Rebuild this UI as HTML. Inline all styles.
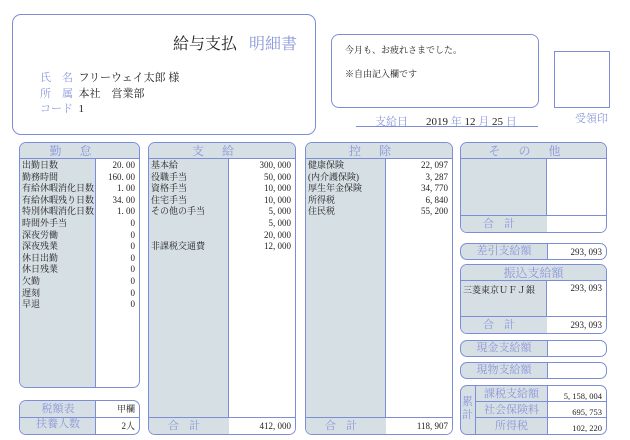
<!DOCTYPE html>
<html><head><meta charset="utf-8"><style>
*{margin:0;padding:0;box-sizing:border-box}
body{width:630px;height:440px;background:#fff;position:relative;overflow:hidden;font-family:"Liberation Serif","Noto Serif CJK SC",serif;color:#222}
.a{position:absolute}
.bx{position:absolute;border:1.5px solid #7e8ed6;border-radius:7px;overflow:hidden;background:#fff}
.hd{position:absolute;left:0;right:0;top:0;height:16px;background:#d6dfe4;border-bottom:1px solid #7e8ed6;color:#8a96da;font-size:12px;text-align:center;line-height:16px;letter-spacing:18px}
.lc{position:absolute;left:0;background:#d6dfe4;border-right:1px solid #7e8ed6}
.l{color:#8a96da}
.rows{position:absolute;font-size:9px;line-height:11.6px}
.num{text-align:right}
.tot{position:absolute;left:0;right:0;bottom:0;height:17px;border-top:1px solid #7e8ed6}
.sm{font-size:9px}
</style></head><body>

<div class="bx" style="left:12px;top:14px;width:304px;height:121px;border-radius:9px">
 <div class="a" style="left:160px;top:16px;font-size:16px">給与支払</div>
 <div class="a l" style="left:236px;top:16px;font-size:16px">明細書</div>
 <div class="a" style="left:27px;top:56px;font-size:11px;line-height:15.5px">
  <div><span class="l">氏　名</span>&nbsp; フリーウェイ太郎 様</div>
  <div><span class="l">所　属</span>&nbsp; 本社　営業部</div>
  <div><span class="l">コード</span>&nbsp; 1</div>
 </div>
</div>

<div class="bx" style="left:331px;top:34px;width:208px;height:74px;border-radius:8px">
 <div class="a sm" style="left:13px;top:8px">今月も、お疲れさまでした。</div>
 <div class="a sm" style="left:13px;top:32px">※自由記入欄です</div>
</div>
<div class="a" style="left:356px;top:113px;font-size:11px;width:182px;height:14px;border-bottom:1.5px solid #7e8ed6">
 <span class="l" style="margin-left:19px">支給日</span><span style="margin-left:18px">2019</span> <span class="l">年</span> 12 <span class="l">月</span> 25 <span class="l">日</span>
</div>
<div class="a" style="left:554px;top:51px;width:56px;height:57px;border:1.5px solid #7e8ed6"></div>
<div class="a l" style="left:575px;top:110px;font-size:11px">受領印</div>

<!-- 勤怠 -->
<div class="bx" style="left:19px;top:142px;width:121px;height:246px">
 <div class="hd">勤怠</div>
 <div class="lc" style="top:16px;bottom:0;width:76px"></div>
 <div class="rows" style="left:2px;top:17px;width:114px">
  <div>出勤日数</div><div>勤務時間</div><div>有給休暇消化日数</div><div>有給休暇残り日数</div><div>特別休暇消化日数</div><div>時間外手当</div><div>深夜労働</div><div>深夜残業</div><div>休日出勤</div><div>休日残業</div><div>欠勤</div><div>遅刻</div><div>早退</div>
 </div>
 <div class="rows num" style="right:4px;top:17px">
  <div>20. 00</div><div>160. 00</div><div>1. 00</div><div>34. 00</div><div>1. 00</div><div>0</div><div>0</div><div>0</div><div>0</div><div>0</div><div>0</div><div>0</div><div>0</div>
 </div>
</div>

<div class="bx" style="left:19px;top:400px;width:121px;height:35px">
 <div class="lc" style="top:0;bottom:0;width:76px"></div>
 <div class="a" style="left:0;right:0;top:16px;border-top:1px solid #7e8ed6"></div>
 <div class="a l" style="left:0;width:76px;top:1px;text-align:center;font-size:11px;line-height:15px">税額表<br>扶養人数</div>
 <div class="a num" style="right:4px;top:0px;font-size:9px;line-height:17px">甲欄<br>2人</div>
</div>

<!-- 支給 -->
<div class="bx" style="left:148px;top:142px;width:148px;height:293px">
 <div class="hd">支給</div>
 <div class="lc" style="top:16px;bottom:0;width:80px"></div>
 <div class="rows" style="left:2px;top:17px">
  <div>基本給</div><div>役職手当</div><div>資格手当</div><div>住宅手当</div><div>その他の手当</div><div>&nbsp;</div><div>&nbsp;</div><div>非課税交通費</div>
 </div>
 <div class="rows num" style="right:4px;top:17px">
  <div>300, 000</div><div>50, 000</div><div>10, 000</div><div>10, 000</div><div>5, 000</div><div>5, 000</div><div>20, 000</div><div>12, 000</div>
 </div>
 <div class="tot" style="background:linear-gradient(90deg,#d6dfe4 80px,#fff 80px)">
  <div class="a l" style="left:0;width:80px;text-align:center;font-size:11px;letter-spacing:10px;line-height:16px">合計</div>
  <div class="a sm" style="right:4px;top:3px">412, 000</div>
 </div>
</div>

<!-- 控除 -->
<div class="bx" style="left:305px;top:142px;width:148px;height:293px">
 <div class="hd">控除</div>
 <div class="lc" style="top:16px;bottom:0;width:80px"></div>
 <div class="rows" style="left:2px;top:17px">
  <div>健康保険</div><div>(内介護保険)</div><div>厚生年金保険</div><div>所得税</div><div>住民税</div>
 </div>
 <div class="rows num" style="right:4px;top:17px">
  <div>22, 097</div><div>3, 287</div><div>34, 770</div><div>6, 840</div><div>55, 200</div>
 </div>
 <div class="tot" style="background:linear-gradient(90deg,#d6dfe4 80px,#fff 80px)">
  <div class="a l" style="left:0;width:80px;text-align:center;font-size:11px;letter-spacing:10px;line-height:16px">合計</div>
  <div class="a sm" style="right:4px;top:3px">118, 907</div>
 </div>
</div>

<!-- その他 -->
<div class="bx" style="left:460px;top:142px;width:147px;height:91px">
 <div class="hd">その他</div>
 <div class="lc" style="top:16px;bottom:0;width:86px"></div>
 <div class="tot" style="background:linear-gradient(90deg,#d6dfe4 86px,#fff 86px)"><div class="a l" style="left:0;width:86px;text-align:center;font-size:11px;letter-spacing:10px;line-height:16px">合計</div></div>
</div>

<div class="bx" style="left:460px;top:243px;width:147px;height:17px;background:linear-gradient(90deg,#d6dfe4 86px,#fff 86px)">
 <div class="a" style="left:86px;top:0;bottom:0;border-left:1px solid #7e8ed6"></div>
 <div class="a l" style="left:0;width:86px;text-align:center;font-size:11px;line-height:15px">差引支給額</div>
 <div class="a sm" style="right:4px;top:3px">293, 093</div>
</div>

<div class="bx" style="left:460px;top:264px;width:147px;height:70px">
 <div class="hd" style="letter-spacing:0">振込支給額</div>
 <div class="lc" style="top:16px;bottom:0;width:86px"></div>
 <div class="a sm" style="left:2px;top:18px">三菱東京ＵＦＪ銀</div>
 <div class="a sm" style="right:4px;top:18px">293, 093</div>
 <div class="tot" style="background:linear-gradient(90deg,#d6dfe4 86px,#fff 86px)"><div class="a l" style="left:0;width:86px;text-align:center;font-size:11px;letter-spacing:10px;line-height:16px">合計</div><div class="a sm" style="right:4px;top:3px">293, 093</div></div>
</div>

<div class="bx" style="left:460px;top:340px;width:147px;height:17px;background:linear-gradient(90deg,#d6dfe4 86px,#fff 86px)">
 <div class="a" style="left:86px;top:0;bottom:0;border-left:1px solid #7e8ed6"></div>
 <div class="a l" style="left:0;width:86px;text-align:center;font-size:11px;line-height:15px">現金支給額</div>
</div>
<div class="bx" style="left:460px;top:362px;width:147px;height:17px;background:linear-gradient(90deg,#d6dfe4 86px,#fff 86px)">
 <div class="a" style="left:86px;top:0;bottom:0;border-left:1px solid #7e8ed6"></div>
 <div class="a l" style="left:0;width:86px;text-align:center;font-size:11px;line-height:15px">現物支給額</div>
</div>

<div class="bx" style="left:460px;top:385px;width:147px;height:50px;background:linear-gradient(90deg,#d6dfe4 86px,#fff 86px)">
 <div class="a" style="left:14px;top:0;bottom:0;border-left:1px solid #7e8ed6"></div>
 <div class="a" style="left:86px;top:0;bottom:0;border-left:1px solid #7e8ed6"></div>
 <div class="a" style="left:14px;right:0;top:15px;border-top:1px solid #7e8ed6"></div>
 <div class="a" style="left:14px;right:0;top:31px;border-top:1px solid #7e8ed6"></div>
 <div class="a l" style="left:1px;top:10px;font-size:11px;line-height:13px;width:12px">累計</div>
 <div class="a l" style="left:15px;width:71px;top:0;text-align:center;font-size:11px;line-height:16px">課税支給額<br>社会保険料<br>所得税</div>
 <div class="a num" style="right:4px;top:2px;font-size:8.5px;line-height:16px">5, 158, 004<br>695, 753<br>102, 220</div>
</div>

</body></html>
